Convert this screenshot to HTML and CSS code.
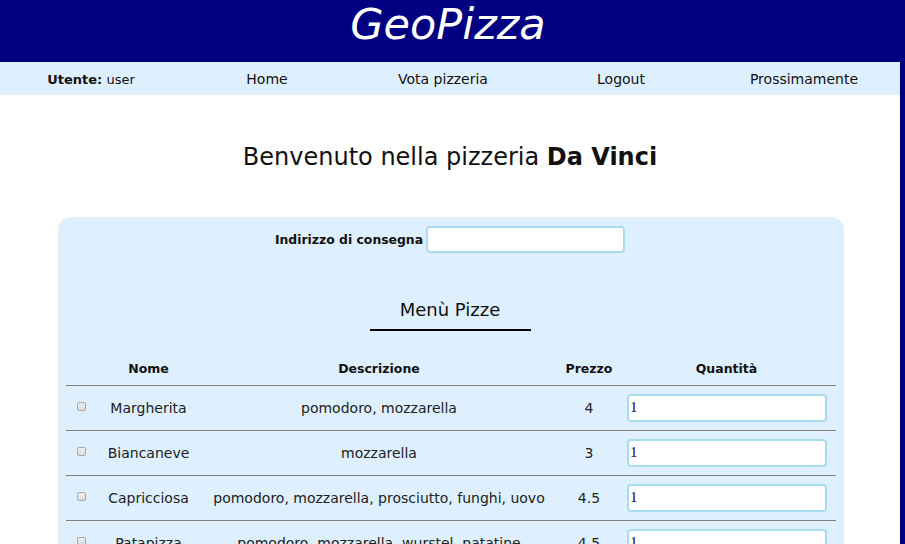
FILE: index.html
```html
<!DOCTYPE html>
<html lang="it">
<head>
<meta charset="utf-8">
<title>GeoPizza</title>
<link rel="stylesheet" href="styles.css">
</head>
<body>
<div class="page">
  <header class="top">
    <h1 class="logo">GeoPizza</h1>
  </header>
  <nav class="nav">
    <span class="nav-item"><b>Utente:</b> user</span>
    <span class="nav-item">Home</span>
    <span class="nav-item">Vota pizzeria</span>
    <span class="nav-item">Logout</span>
    <span class="nav-item">Prossimamente</span>
  </nav>
  <main class="content">
    <h2 class="welcome">Benvenuto nella pizzeria <b>Da Vinci</b></h2>
    <section class="order">
      <div class="address">
        <label class="address-label">Indirizzo di consegna</label>
        <input class="address-input" type="text">
      </div>
      <div class="menu-title-wrap">
        <h3 class="menu-title">Menù Pizze</h3>
      </div>
      <table class="menu">
        <colgroup>
          <col class="c-check"><col class="c-name"><col class="c-desc"><col class="c-price"><col class="c-qty">
        </colgroup>
        <thead>
          <tr><th></th><th>Nome</th><th>Descrizione</th><th>Prezzo</th><th>Quantità</th></tr>
        </thead>
        <tbody>
          <tr><td><input class="chk" type="checkbox"></td><td>Margherita</td><td>pomodoro, mozzarella</td><td>4</td><td><input class="qty" type="text" value="1"></td></tr>
          <tr><td><input class="chk" type="checkbox"></td><td>Biancaneve</td><td>mozzarella</td><td>3</td><td><input class="qty" type="text" value="1"></td></tr>
          <tr><td><input class="chk" type="checkbox"></td><td>Capricciosa</td><td>pomodoro, mozzarella, prosciutto, funghi, uovo</td><td>4.5</td><td><input class="qty" type="text" value="1"></td></tr>
          <tr><td><input class="chk" type="checkbox"></td><td>Patapizza</td><td>pomodoro, mozzarella, wurstel, patatine</td><td>4.5</td><td><input class="qty" type="text" value="1"></td></tr>
        </tbody>
      </table>
    </section>
  </main>
</div>
</body>
</html>
```
FILE: styles.css
```css
html, body {
  margin: 0;
  padding: 0;
}
body {
  background: #000080;
  font-family: "DejaVu Sans", sans-serif;
  color: #111;
  overflow: hidden;
}
.page {
  width: 900px;
  min-height: 544px;
  background: #fff;
}
.top {
  background: #000080;
  height: 62px;
  display: flex;
  justify-content: center;
  align-items: flex-start;
}
.logo {
  margin: 0 0 0 -4px;
  color: #fff;
  font-style: italic;
  font-weight: 200;
  font-size: 43px;
  line-height: 48px;
}
.nav {
  background: #def0fd;
  height: 33px;
  display: grid;
  grid-template-columns: 182px 170px 182px 174px 1fr;
  align-items: center;
  font-size: 14px;
}
.nav-item {
  text-align: center;
  padding-top: 1px;
}
.nav-item:first-child {
  font-size: 13px;
}
.content {
  padding-top: 46px;
}
.welcome {
  margin: 0;
  text-align: center;
  font-weight: normal;
  font-size: 24px;
  line-height: 32px;
}
.order {
  margin: 44px 56px 0 58px;
  background: #def0fd;
  border-radius: 13px 13px 0 0;
  padding: 9px 8px 0 8px;
  min-height: 340px;
}
.address {
  display: flex;
  justify-content: center;
  align-items: center;
  gap: 3px;
  margin-left: -2px;
}
.address-label {
  font-weight: bold;
  font-size: 12.4px;
}
.address-input {
  box-sizing: border-box;
  width: 199px;
  height: 27px;
  border: 2px solid #a6def0;
  border-radius: 4px;
  background: #fff;
  margin: 0;
}
.menu-title-wrap {
  text-align: center;
  margin-top: 45px;
  padding-right: 2px;
}
.menu-title {
  display: inline-block;
  margin: 0;
  font-weight: normal;
  font-size: 18px;
  line-height: 24px;
  padding: 0 30px 7px 30px;
  border-bottom: 2px solid #000;
  width: 101px;
}
.menu {
  margin-top: 22px;
  width: 770px;
  table-layout: fixed;
  border-collapse: collapse;
}
.c-check { width: 34px; }
.c-name { width: 97px; }
.c-desc { width: 364px; }
.c-price { width: 56px; }
.c-qty { width: 219px; }
.menu th {
  font-size: 12.5px;
  font-weight: bold;
  height: 32px;
  padding: 0 0 1px 0;
  box-sizing: border-box;
  border-bottom: 1px solid #808080;
  text-align: center;
}
.menu td {
  font-size: 14px;
  height: 44px;
  padding: 0;
  border-bottom: 1px solid #808080;
  text-align: center;
  white-space: nowrap;
  color: #222;
}
.menu td:first-child {
  text-align: left;
}
.chk {
  appearance: none;
  -webkit-appearance: none;
  box-sizing: border-box;
  width: 9px;
  height: 9px;
  margin: 0 0 5px 11px;
  border: 1px solid #a9a9a9;
  border-radius: 2px;
  background: linear-gradient(#eeeeee, #dcdcdc);
  vertical-align: middle;
}
.qty {
  box-sizing: border-box;
  width: 200px;
  height: 28px;
  border: 2px solid #a6def0;
  border-radius: 4px;
  background: #fff;
  margin: 0 0 0 1px;
  padding: 0 1px;
  font-family: "Liberation Serif", serif;
  font-size: 15px;
  color: #200050;
}
```
